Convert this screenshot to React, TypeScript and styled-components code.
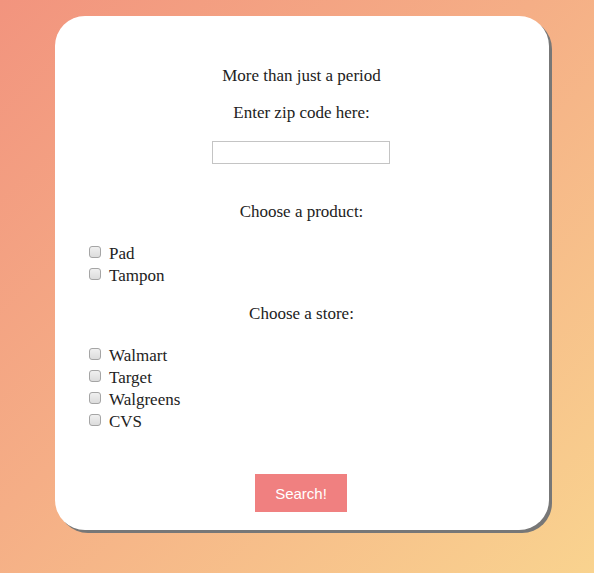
import React from "react";
import styled, { createGlobalStyle } from "styled-components";

const Global = createGlobalStyle`
  html, body { margin: 0; padding: 0; }
  body {
    width: 594px;
    min-height: 573px;
    background: linear-gradient(to bottom right, #f2947e 0%, #f5ae86 45%, #f9d38f 100%);
    font-family: "Liberation Serif", "Times New Roman", serif;
    color: #222;
  }
`;

const Page = styled.div`
  padding: 16px 0 0 55px;
  height: 557px;
  box-sizing: border-box;
`;

const Card = styled.form`
  width: 494px;
  box-sizing: border-box;
  background: #fff;
  border-radius: 30px;
  box-shadow: 3px 3px 0 #777;
  padding: 50px 32px 18px 31px;
  display: flex;
  flex-direction: column;
`;

const Heading = styled.p<{ $top?: number }>`
  margin: ${(p) => p.$top ?? 0}px 0 0;
  font-size: 17px;
  line-height: 20px;
  text-align: center;
`;

const ZipInput = styled.input`
  align-self: center;
  margin: 18px 1px 0 0;
  width: 178px;
  height: 23px;
  box-sizing: border-box;
  border: 1px solid #c4c4c4;
  padding: 0 4px;
  font-size: 14px;
  outline: none;
`;

const Group = styled.div<{ $top: number }>`
  margin-top: ${(p) => p.$top}px;
  display: flex;
  flex-direction: column;
`;

const Row = styled.label`
  display: flex;
  align-items: center;
  height: 22px;
  font-size: 17px;
`;

const Box = styled.input`
  appearance: none;
  width: 12px;
  height: 12px;
  margin: 0 8px 0 3px;
  position: relative;
  top: -2px;
  border: 1px solid #a5a5a5;
  border-radius: 3px;
  background: linear-gradient(#f0f0f0, #dcdcdc);
  box-sizing: border-box;
`;

const Button = styled.button`
  align-self: center;
  margin: 41px 1px 0 0;
  width: 92px;
  height: 38px;
  border: none;
  background: #f08080;
  color: #fff;
  font-family: "Liberation Sans", Arial, sans-serif;
  font-size: 15px;
`;

const products = ["Pad", "Tampon"];
const stores = ["Walmart", "Target", "Walgreens", "CVS"];

export default function App() {
  return (
    <>
      <Global />
      <Page>
        <Card onSubmit={(e) => e.preventDefault()}>
          <Heading>More than just a period</Heading>
          <Heading $top={17}>Enter zip code here:</Heading>
          <ZipInput type="text" />
          <Heading $top={38}>Choose a product:</Heading>
          <Group $top={21}>
            {products.map((p) => (
              <Row key={p}>
                <Box type="checkbox" />
                {p}
              </Row>
            ))}
          </Group>
          <Heading $top={17}>Choose a store:</Heading>
          <Group $top={21}>
            {stores.map((s) => (
              <Row key={s}>
                <Box type="checkbox" />
                {s}
              </Row>
            ))}
          </Group>
          <Button type="submit">Search!</Button>
        </Card>
      </Page>
    </>
  );
}
